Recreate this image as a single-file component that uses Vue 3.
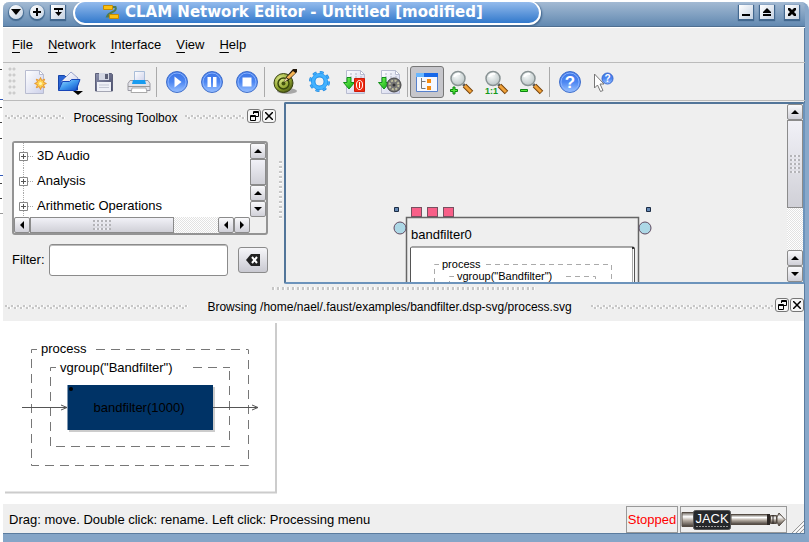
<script setup>
import { ref } from 'vue'

const menus = ['File', 'Network', 'Interface', 'View', 'Help']
const categories = ['3D Audio', 'Analysis', 'Arithmetic Operations']
const filter = ref('')
const inPorts = [411, 427, 443]
const backdropMarks = [69, 107, 122, 138, 183, 198]
</script>

<template>
  <div class="desktop">
    <svg class="backdrop" width="3" height="542" viewBox="0 0 3 542" aria-hidden="true">
      <path v-for="y in backdropMarks" :key="y" :d="`M0 ${y + 0.5}h2`" stroke="#444" />
      <path d="M0 99.500h3M0 175.500h3" stroke="#3058b8" />
      <path d="M0 213.500h3" stroke="#999" />
    </svg>
    <svg class="defs" width="0" height="0" aria-hidden="true">
      <defs>
        <linearGradient id="paper" x1="0" y1="0" x2="1" y2="1"><stop offset="0" stop-color="#fff" /><stop offset="1" stop-color="#ccd0ea" /></linearGradient>
        <linearGradient id="orb" x1="0" y1="0" x2="0" y2="1"><stop offset="0" stop-color="#3c74e4" /><stop offset=".5" stop-color="#4c86f2" /><stop offset="1" stop-color="#9cc4ff" /></linearGradient>
        <linearGradient id="folder" x1="0" y1="0" x2="1" y2="1"><stop offset="0" stop-color="#9fe0ff" /><stop offset=".5" stop-color="#3f97ee" /><stop offset="1" stop-color="#0d46c0" /></linearGradient>
        <linearGradient id="disk" x1="0" y1="0" x2="1" y2="1"><stop offset="0" stop-color="#8d92ad" /><stop offset="1" stop-color="#464a68" /></linearGradient>
        <linearGradient id="lime" x1="0" y1="0" x2="1" y2="1"><stop offset="0" stop-color="#7dff5a" /><stop offset="1" stop-color="#08a010" /></linearGradient>
        <linearGradient id="chrome" x1="0" y1="0" x2="0" y2="1"><stop offset="0" stop-color="#6b645c" /><stop offset=".3" stop-color="#fff" /><stop offset=".55" stop-color="#b9b0a6" /><stop offset="1" stop-color="#453e38" /></linearGradient>
        <radialGradient id="lens" cx=".4" cy=".3" r=".8"><stop offset="0" stop-color="#f8fbfb" /><stop offset="1" stop-color="#b4bfc0" /></radialGradient>
        <radialGradient id="olive" cx=".35" cy=".3" r=".8"><stop offset="0" stop-color="#dbe88a" /><stop offset=".6" stop-color="#93a632" /><stop offset="1" stop-color="#3c4a0c" /></radialGradient>
        <g id="sheet">
          <path d="M4.500 1.500h14l4 4v19h-18z" fill="url(#paper)" stroke="#b8bcd0" />
          <path d="M18.500 1.500l4 4h-4z" fill="#fff" stroke="#b8bcd0" />
        </g>
        <g id="export">
          <use href="#sheet" />
          <path d="M8 5h2m3 0h2M8 8h2m3 0h2m3 0h2" stroke="#b0b4c4" />
          <path d="M5 8.500h4v5h3.500L7 20 1.500 13.500H5z" fill="url(#lime)" stroke="#119018" />
        </g>
        <g id="magnifier">
          <path d="M15.500 16.500l7 7" stroke="#754009" stroke-width="5" />
          <path d="M15 16l7 7" stroke="#f0a23a" stroke-width="3" />
          <path d="M14 17l2-2" stroke="#555" stroke-width="2" />
          <circle cx="9" cy="9.500" r="7" fill="url(#lens)" stroke="#899394" stroke-width="1.500" />
          <path d="M5 8a5 5 0 0 1 6-3" fill="none" stroke="#fff" stroke-width="2" />
        </g>
        <g id="ball">
          <circle cx="13" cy="13" r="10.500" fill="url(#orb)" stroke="#4270cb" />
          <circle cx="13" cy="13" r="9" fill="none" stroke="#88b2ff" />
        </g>
      </defs>
    </svg>

    <div class="window">
      <header class="titlebar">
        <div class="wm">
          <button class="orb" aria-label="Window menu"><svg width="10" height="6"><path d="M0 0h10L5 6z" /></svg></button>
          <button class="orb" aria-label="On all desktops"><svg width="8" height="8"><path d="M3 0h2v3h3v2H5v3H3V5H0V3h3z" /></svg></button>
          <button class="sq" aria-label="Shade"><svg width="9" height="8"><path d="M0 0h9v2H0zM1 4h7L4.500 8zM4 2h1v2H4z" /></svg></button>
        </div>
        <h1 class="title">
          <svg width="16" height="16" viewBox="0 0 16 16" aria-hidden="true">
            <path d="M10 3h2.500q1.500 3-3 5T4 12.500h3" fill="none" stroke="#4e7c54" stroke-width="2" />
            <path d="M.5 1.500h9v4h-9zM6.500 10.500h9v4h-9z" fill="#fcc010" stroke="#c48c04" />
          </svg>
          <span>CLAM Network Editor - Untitled [modified]</span>
        </h1>
        <div class="wm right">
          <button class="sq" aria-label="Minimize"><svg width="8" height="8"><path d="M0 6h8v2H0z" /></svg></button>
          <button class="sq" aria-label="Maximize"><svg width="8" height="8"><path d="M4 0l4 4v1H0V4zM0 6h8v2H0z" /></svg></button>
          <button class="sq close" aria-label="Close"><svg width="8" height="8"><path d="M0 0h2l2 2 2-2h2v2L6 4l2 2v2H6L4 6 2 8H0V6l2-2-2-2z" /></svg></button>
        </div>
      </header>

      <nav class="menubar">
        <button v-for="m in menus" :key="m"><u>{{ m[0] }}</u>{{ m.slice(1) }}</button>
      </nav>

      <div class="toolbar" role="toolbar">
        <span class="grip"></span>
        <button aria-label="New">
          <svg viewBox="0 0 26 26"><use href="#sheet" />
            <path d="M19.500 8.500l1.200 3 3-1.300-1.300 3 3 1.300-3 1.200 1.300 3-3-1.200-1.200 3-1.200-3-3 1.200 1.300-3-3-1.200 3-1.300-1.300-3 3 1.300z" fill="#ffd34f" stroke="#e8962c" />
            <circle cx="19.500" cy="14.500" r="1.500" fill="#fff4b0" />
          </svg>
        </button>
        <button aria-label="Open">
          <svg viewBox="0 0 26 26">
            <path d="M2.500 21V6.500h6l2 2h11V21z" fill="#2b65d4" stroke="#1745a8" />
            <path d="M6 12l9-9 7 6-2 8H7z" fill="url(#paper)" stroke="#9aa4cc" />
            <path d="M2.500 21.500l4-9h7l2-2h8.500l-4 11z" fill="url(#folder)" stroke="#1745b8" />
            <path d="M17 22h10l-5 4z" fill="#000" />
          </svg>
        </button>
        <button aria-label="Save">
          <svg viewBox="0 0 26 26">
            <path d="M4.500 4.500h16l1 1v16.500h-17z" fill="url(#disk)" stroke="#5d617b" />
            <path d="M8 4h10v7H8z" fill="#d4d8e4" /><path d="M14 5h3v5h-3z" fill="#5c6076" />
            <path d="M6 13h14v9H6z" fill="#eef0f6" /><path d="M8 16h10M8 18.500h10" stroke="#c3c7d4" />
          </svg>
        </button>
        <button aria-label="Print">
          <svg viewBox="0 0 26 26">
            <path d="M8.500 2.500h10v11h-10z" fill="url(#paper)" stroke="#a9bdd8" />
            <path d="M4 11.500h18l2 3v7H2v-7z" fill="#e2e2e8" stroke="#9a9aa4" />
            <path d="M7 11h12l1 4H6z" fill="#189cf0" />
            <path d="M2 17.500h22" stroke="#999" />
            <path d="M6 19h14l1 4.500H5z" fill="#fff" stroke="#aaa" />
          </svg>
        </button>
        <i class="sep"></i>
        <button aria-label="Play"><svg viewBox="0 0 26 26"><use href="#ball" /><path d="M10.500 7.500l7 5.500-7 5.500z" fill="#fff" /></svg></button>
        <button aria-label="Pause"><svg viewBox="0 0 26 26"><use href="#ball" /><path d="M8.500 8h3.500v10H8.500zM14 8h3.500v10H14z" fill="#fff" /></svg></button>
        <button aria-label="Stop"><svg viewBox="0 0 26 26"><use href="#ball" /><path d="M8.500 8.500h9v9h-9z" fill="#fff" /></svg></button>
        <i class="sep"></i>
        <button aria-label="Configure target">
          <svg viewBox="0 0 26 26">
            <ellipse cx="15" cy="22" rx="10" ry="3" fill="#777" opacity=".6" />
            <circle cx="11.500" cy="14" r="9.500" fill="url(#olive)" stroke="#36400e" />
            <circle cx="11.500" cy="14.500" r="5.500" fill="none" stroke="#39480c" stroke-width="1.500" />
            <circle cx="11.500" cy="14.500" r="2" fill="#43520f" />
            <path d="M12 13l2-5 7-8h4v3l-8 8z" fill="#201608" />
            <path d="M14.500 8.500L21 2l2.500 2-6.500 6z" fill="#f4b455" />
            <path d="M12 13l2-4 2 1.500z" fill="#f5dfb4" />
          </svg>
        </button>
        <button aria-label="Settings">
          <svg viewBox="0 0 26 26">
            <circle cx="12.500" cy="12.500" r="8.500" fill="none" stroke="#1b84dd" stroke-width="4" stroke-dasharray="3.600 3.076" />
            <circle cx="12.500" cy="12.500" r="8.500" fill="none" stroke="#41aaf8" stroke-width="3" stroke-dasharray="3 3.676" stroke-dashoffset="-.3" />
            <circle cx="12.500" cy="12.500" r="6.300" fill="none" stroke="#1b8de8" stroke-width="4.500" />
            <circle cx="12.500" cy="12.500" r="6.500" fill="none" stroke="#43b2ff" stroke-width="3" />
          </svg>
        </button>
        <button aria-label="Compile as executable">
          <svg viewBox="0 0 26 26"><use href="#export" />
            <path d="M12.500 9.500h10v13h-10z" fill="#ed2a10" stroke="#cf1a08" />
            <ellipse cx="17.500" cy="16" rx="3" ry="4.500" fill="none" stroke="#fff" /><path d="M17.500 13v6" stroke="#fff" />
          </svg>
        </button>
        <button aria-label="Compile as plugin">
          <svg viewBox="0 0 26 26"><use href="#export" />
            <circle cx="17" cy="16" r="7" fill="#777" stroke="#444" />
            <circle cx="17" cy="16" r="4.500" fill="none" stroke="#c2c09c" stroke-width="2" stroke-dasharray="2 1.530" />
            <circle cx="17" cy="16" r="1.500" fill="#333" />
          </svg>
        </button>
        <i class="sep"></i>
        <button class="pressed" aria-label="Processing tree" aria-pressed="true">
          <svg viewBox="0 0 26 26">
            <path d="M2.500 4.500h21v18h-21z" fill="#f5f8ff" stroke="#5680cc" />
            <path d="M2 4h22v4H2z" fill="#1768e8" /><path d="M2 4h8v4H2z" fill="#69b7ff" />
            <path d="M7.500 9v10.500h4M7.500 12.500h4" fill="none" stroke="#777" />
            <path d="M13 10h4v4h-4zM13 17h4v4h-4z" fill="#f58a10" />
          </svg>
        </button>
        <button aria-label="Zoom in"><svg viewBox="0 0 26 26"><use href="#magnifier" /><path d="M4 18h2v2.500h2.500v2H6V25H4v-2.500H1.500v-2H4z" fill="#55e838" stroke="#0b8410" /></svg></button>
        <button aria-label="Normal size"><svg viewBox="0 0 26 26"><use href="#magnifier" /><text class="ratio" x="1" y="25">1:1</text></svg></button>
        <button aria-label="Zoom out"><svg viewBox="0 0 26 26"><use href="#magnifier" /><path d="M1.500 20.500h7v2h-7z" fill="#55e838" stroke="#0b8410" /></svg></button>
        <i class="sep"></i>
        <button aria-label="Help"><svg viewBox="0 0 26 26"><use href="#ball" /><text class="qmark" x="13" y="19">?</text></svg></button>
        <button aria-label="What's this?">
          <svg viewBox="0 0 26 26">
            <path d="M2.500 5v14l3-3 3 6.500 2.500-1-3-6.500H12z" fill="#fff" stroke="#777" />
            <circle cx="15.500" cy="9.500" r="5.500" fill="url(#orb)" stroke="#3868d0" /><text class="qmark small" x="15.500" y="13">?</text>
          </svg>
        </button>
      </div>

      <main class="workspace">
        <section class="dock">
          <div class="dock-head">
            <span class="dots"></span><h2>Processing Toolbox</h2><span class="dots"></span>
            <button class="mini" aria-label="Float"><svg width="9" height="10"><path d="M3.500 3V.5h5v5H6M3 1.500h6M.5 4.500h5v5h-5zM0 5.500h6" fill="none" stroke="#000" /></svg></button>
            <button class="mini" aria-label="Close"><svg width="8" height="8"><path d="M0 0l8 8M8 0L0 8" stroke="#000" stroke-width="1.500" /></svg></button>
          </div>
          <div class="toolbox">
            <div class="treebox">
              <ul class="tree">
                <li v-for="c in categories" :key="c">
                  <svg width="16" height="25" aria-hidden="true">
                    <path d="M5.500 0v25M10 13.500h6" stroke="#aaa" stroke-dasharray="1 1" />
                    <path d="M1.500 9.500h8v8h-8z" fill="#fff" stroke="#888" /><path d="M3 13.500h5M5.500 11v5" stroke="#555" />
                  </svg>
                  <span>{{ c }}</span>
                </li>
              </ul>
              <div class="scroll v">
                <button aria-label="Up"><svg width="8" height="4"><path d="M0 4h8L4 0z" /></svg></button>
                <span class="thumb fill"></span>
                <button aria-label="Page up"><svg width="8" height="4"><path d="M0 4h8L4 0z" /></svg></button>
                <button aria-label="Down"><svg width="8" height="4"><path d="M0 0h8L4 4z" /></svg></button>
              </div>
              <div class="scroll h">
                <button aria-label="Left"><svg width="4" height="8"><path d="M4 0v8L0 4z" /></svg></button>
                <span class="thumb wide"><i class="ridges across"></i></span>
                <span class="track"></span>
                <button aria-label="Page left"><svg width="4" height="8"><path d="M4 0v8L0 4z" /></svg></button>
                <button aria-label="Right"><svg width="4" height="8"><path d="M0 0v8l4-4z" /></svg></button>
              </div>
            </div>
            <div class="filter">
              <label for="filter">Filter:</label>
              <input id="filter" v-model="filter" type="text" />
              <button aria-label="Clear filter" @click="filter = ''">
                <svg width="14" height="12"><path d="M0 6l5-6h9v12H5z" fill="#222" /><path d="M6 3l5 6M11 3L6 9" stroke="#fff" stroke-width="2" /></svg>
              </button>
            </div>
          </div>
        </section>
        <span class="vsplit"><i></i></span>
        <section class="canvas">
          <div class="scene">
            <svg class="node" width="265" height="96" viewBox="391 203 265 96">
              <path d="M406.500 217.500h232v90h-232z" fill="#efefef" stroke="#666" stroke-width="1.500" />
              <rect v-for="x in inPorts" :key="x" :x="x + 0.5" y="207.500" width="10" height="9" fill="#f85f88" stroke="#775060" />
              <circle cx="400" cy="228" r="6" fill="#add8e6" stroke="#604a60" />
              <circle cx="645" cy="228" r="6" fill="#add8e6" stroke="#604a60" />
              <path d="M394.500 207.500h4v4h-4zM646.500 207.500h4v4h-4z" fill="#6488b4" stroke="#1c2c44" />
              <text x="411" y="239" font-size="13">bandfilter0</text>
              <path d="M410.500 310v-62l1-1h222l1 1v62z" fill="#fff" stroke="#555" />
              <path d="M632.500 247v60" stroke="#aaa" /><circle cx="633" cy="248" r="1" />
              <g fill="none" stroke="#aaa" stroke-dasharray="5 4">
                <path d="M439 264.500h-4.500v30" /><path d="M486 264.500h125.500v30" />
                <path d="M454 276.500h-4.500v10" /><path d="M566 276.500h29.500v10" />
              </g>
              <text x="442" y="268" font-size="11">process</text>
              <text x="457" y="280" font-size="11">vgroup("Bandfilter")</text>
            </svg>
          </div>
          <div class="scroll v">
            <button aria-label="Up"><svg width="8" height="4"><path d="M0 4h8L4 0z" /></svg></button>
            <span class="thumb tall"><i class="ridges down"></i></span>
            <span class="track"></span>
            <button aria-label="Page up"><svg width="8" height="4"><path d="M0 4h8L4 0z" /></svg></button>
            <button aria-label="Down"><svg width="8" height="4"><path d="M0 0h8L4 4z" /></svg></button>
          </div>
        </section>
      </main>

      <div class="hsplit"><i></i></div>

      <section class="browser">
        <div class="dock-head low">
          <span class="dots"></span><h2>Browsing /home/nael/.faust/examples/bandfilter.dsp-svg/process.svg</h2><span class="dots"></span>
          <button class="mini" aria-label="Float"><svg width="9" height="10"><path d="M3.500 3V.5h5v5H6M3 1.500h6M.5 4.500h5v5h-5zM0 5.500h6" fill="none" stroke="#000" /></svg></button>
          <button class="mini" aria-label="Close"><svg width="8" height="8"><path d="M0 0l8 8M8 0L0 8" stroke="#000" stroke-width="1.500" /></svg></button>
        </div>
        <div class="page">
          <svg width="272" height="171" viewBox="5 323 272 171">
            <path d="M276 323v169.500M5 492.500h272" fill="none" stroke="#ccc" stroke-width="2" />
            <g fill="none" stroke="#777" stroke-dasharray="9 6">
              <path d="M37 349.500h-5.500v116h217v-116" /><path d="M96 349.500h152" />
              <path d="M56 367.500h-5.500v79h179v-79" /><path d="M193 367.500h37" />
            </g>
            <path d="M69 387h146v45H69z" fill="#ccc" />
            <path d="M67.500 385h145.500v45H67.500z" fill="#036" />
            <circle cx="71" cy="389" r="2" />
            <path d="M22 407.500h45M213 407.500h45M61 405l6 2.500-6 2.500M252 405l6 2.500-6 2.500" fill="none" stroke="#555" />
            <g font-size="13">
              <text x="41" y="353">process</text>
              <text x="60" y="372">vgroup("Bandfilter")</text>
              <text x="139" y="412" text-anchor="middle">bandfilter(1000)</text>
            </g>
          </svg>
        </div>
      </section>

      <footer class="status">
        <span class="hint">Drag: move. Double click: rename. Left click: Processing menu</span>
        <span class="cell stopped">Stopped</span>
        <span class="cell">
          <svg width="105" height="24" viewBox="681 507 105 24" role="img" aria-label="JACK Audio Connection Kit">
            <path d="M682 511.500h12v14h-12z" fill="url(#chrome)" stroke="#554c44" />
            <path d="M731 513.500h38v10h-38z" fill="url(#chrome)" stroke="#554c44" />
            <path d="M767 513h3v11h-3z" fill="#2c2724" />
            <path d="M770.500 514.500h6v8h-6z" fill="url(#chrome)" stroke="#554c44" />
            <path d="M773 514v9" stroke="#2c2724" />
            <path d="M777 516l2-4 6 6.500-6 6.500-2-4z" fill="url(#chrome)" stroke="#554c44" />
            <rect x="693.500" y="509.500" width="37" height="19" rx="2" fill="#25282b" stroke="#555" />
            <text class="jack" x="712" y="522" text-anchor="middle">JACK</text>
            <path d="M696 525.500h32" stroke="#999" stroke-dasharray="2 1" />
          </svg>
        </span>
        <svg class="sizegrip" width="12" height="12"><path d="M0 12L12 0M4 12l8-8M8 12l4-4" stroke="#999" /><path d="M2 12L12 2M6 12l6-6" stroke="#fff" /></svg>
      </footer>
    </div>
  </div>
</template>

<style>
body { background: #fff; }
</style>

<style scoped>
.desktop { display: flex; height: 100vh; font: 13px/16px "Liberation Sans", sans-serif; color: #000; overflow: hidden; }
.desktop * { box-sizing: border-box; }
button { font: inherit; color: inherit; padding: 0; margin: 0; border: 0; background: none; display: flex; align-items: center; justify-content: center; flex: none; }
h1, h2, ul { margin: 0; padding: 0; }
svg { display: block; flex: none; }
svg text { font-family: "Liberation Sans", sans-serif; fill: #000; }
.backdrop { flex: none; }
.defs { position: absolute; }
.window { flex: 1; min-width: 0; display: flex; flex-direction: column; margin-top: 2px; background: #efefef; border-right: 4px solid #88a8ca; border-bottom: 8px solid #85a5c7; border-radius: 6px 8px 0 0; box-shadow: inset -1px 0 #5b7c9f, inset 0 -1px #5b7c9f; overflow: hidden; }

.titlebar { display: flex; align-items: flex-start; height: 25px; margin-right: -4px; background: linear-gradient(#a3bad3, #6289b1); border-bottom: 1px solid #506f90; }
.wm { display: flex; gap: 7px; padding: 3px 6px 0; width: 70px; flex: none; }
.wm button { width: 14px; height: 14px; background: linear-gradient(135deg, #fff, #c5d2e2); box-shadow: 0 1px 1px 1px #42688f; }
.wm .orb { border-radius: 8px; }
.wm.right { width: auto; margin-left: auto; padding-right: 10px; }
.wm .close { margin-left: 4px; }
.title { flex: 0 1 468px; height: 24px; display: flex; align-items: center; gap: 6px; margin-top: -1px; padding: 0 28px 2px; border: 2px solid #fff; border-top-width: 1px; border-radius: 12px; background: linear-gradient(#94bbec, #3279cc); box-shadow: 1px 1px 2px #3a5f88; color: #fff; font: bold 15px/20px "DejaVu Sans", sans-serif; white-space: nowrap; }

.menubar { display: flex; gap: 15px; height: 35px; padding: 0 9px; align-items: center; border-top: 1px solid #fff; }
.menubar u { text-underline-offset: 3px; }

.toolbar { display: flex; align-items: center; height: 39px; border-top: 1px solid #bbb; border-bottom: 1px solid #bbb; padding-left: 5px; }
.toolbar button { width: 35px; height: 32px; }
.toolbar button svg { width: 26px; height: 26px; overflow: visible; }
.toolbar .pressed { width: 34px; border: 1px solid #777; border-radius: 3px; background: #c6c6cb; }
.grip { width: 8px; height: 30px; background: radial-gradient(circle at 2px 2px, #ccc 1px, transparent 2px) 0 0 / 4px 6px; }
.sep { width: 3px; height: 30px; border-left: 1px solid #aaa; flex: none; }
.ratio { font-size: 9px; font-weight: bold; }
.toolbar .ratio { fill: #13991a; }
.toolbar .qmark { font-size: 17px; font-weight: bold; fill: #fff; text-anchor: middle; }
.toolbar .small { font-size: 10px; }

.workspace { display: flex; padding-top: 1px; }
.dock { flex: 0 0 274px; min-width: 0; }
.dock-head { display: flex; align-items: center; height: 30px; padding: 0 2px; }
.dock-head h2 { font-weight: normal; font-size: 12px; line-height: 16px; white-space: nowrap; margin: 2px 8px 0; }
.dots { flex: 1; height: 4px; margin: 0 1px 0 0; background: linear-gradient(90deg, #c6c6c6 2px, #fff 2px, #fff 3px, transparent 3px) 0 0 / 6px 2px repeat-x, linear-gradient(90deg, #c6c6c6 2px, #fff 2px, #fff 3px, transparent 3px) 3px 2px / 6px 2px repeat-x; }
.mini { width: 14px; height: 14px; margin: 0 0 3px 1px; border: 1px solid #777; border-radius: 3px; background: #f6f6f6; }
.dock > .dock-head { padding-right: 1px; }
.low { height: 29px; padding-right: 1px; }
.low h2 { margin: 0 19px; }
.low .dots { margin: 0; }

.toolbox { padding: 9px 9px 8px; }
.treebox { display: grid; grid-template-columns: minmax(0, 1fr) 16px; grid-template-rows: 74px 16px; border: 2px solid #949494; border-radius: 3px; background: #efefef; }
.tree { list-style: none; background: #fff; overflow: hidden; }
.tree li { display: flex; align-items: center; gap: 3px; height: 25px; padding-left: 4px; }
.scroll { display: flex; }
.scroll.v { flex-direction: column; width: 16px; }
.scroll button { width: 16px; height: 16px; border: 1px solid #8b8b8b; border-radius: 2px; background: linear-gradient(#fafafc, #d0d0d8); }
.thumb { display: flex; align-items: center; justify-content: center; border: 1px solid #8b8b8b; background: linear-gradient(#f1f1f7, #d0d0d7); }
.fill { flex: 1; }
.wide { flex: 0 0 144px; }
.tall { flex: 0 0 88px; }
.track { flex: 1; background: repeating-conic-gradient(#e2e2e2 0 25%, #fff 0 50%) 0 0 / 2px 2px; }
.ridges { background: linear-gradient(90deg, #b4b4b8 2px, transparent 2px) 0 0 / 4px 4px, #eeeef4; -webkit-mask: linear-gradient(#000 2px, transparent 2px) 0 0 / 4px 4px; mask: linear-gradient(#000 2px, transparent 2px) 0 0 / 4px 4px; }
.across { width: 18px; height: 10px; }
.down { width: 10px; height: 18px; }
.filter { display: flex; align-items: center; margin-top: 9px; }
.filter label { width: 37px; flex: none; }
.filter input { flex: 1; min-width: 0; height: 32px; border: 1px solid #8b8b8b; border-radius: 3px; background: #fff; font: inherit; padding: 0 6px; box-shadow: inset 0 1px #bbb; }
.filter button { width: 30px; height: 26px; margin-left: 10px; border: 1px solid #8b8b8b; border-radius: 3px; background: linear-gradient(#f6f6f9, #c9c9d1); }
.vsplit { width: 7px; flex: none; display: flex; align-items: center; justify-content: center; }
.vsplit i { width: 3px; height: 60px; margin-bottom: 4px; background: linear-gradient(#c6c6c6 2px, #fff 2px, #fff 3px, transparent 3px) 0 0 / 3px 5px; }
.canvas { flex: 1; min-width: 0; display: flex; border: 2px solid #6c93bb; border-top-color: #527599; border-left-color: #527599; border-radius: 2px; }
.scene { position: relative; flex: 1; overflow: hidden; }
.node { position: absolute; left: 105px; top: 99px; }

.hsplit { display: flex; justify-content: center; align-items: center; height: 8px; flex: none; }
.hsplit i { width: 264px; height: 3px; background: linear-gradient(90deg, #c6c6c6 2px, #fff 2px, #fff 3px, transparent 3px) 0 0 / 5px 3px; }

.browser { flex: 1; min-height: 0; display: flex; flex-direction: column; }
.page { flex: 1; min-height: 0; background: #fff; padding: 2px; overflow: hidden; margin-right: 1px; }
.status { display: flex; align-items: center; gap: 2px; height: 30px; flex: none; padding: 1px 0 0 6px; }
.hint { flex: 1; white-space: nowrap; }
.cell { display: flex; align-items: center; justify-content: center; height: 27px; border: 1px solid #999; }
.stopped { width: 52px; color: #f00; }
.jack { font-size: 13px; }
.status .jack { fill: #fff; }
.sizegrip { align-self: flex-end; margin: 0 1px 1px 3px; }
</style>
